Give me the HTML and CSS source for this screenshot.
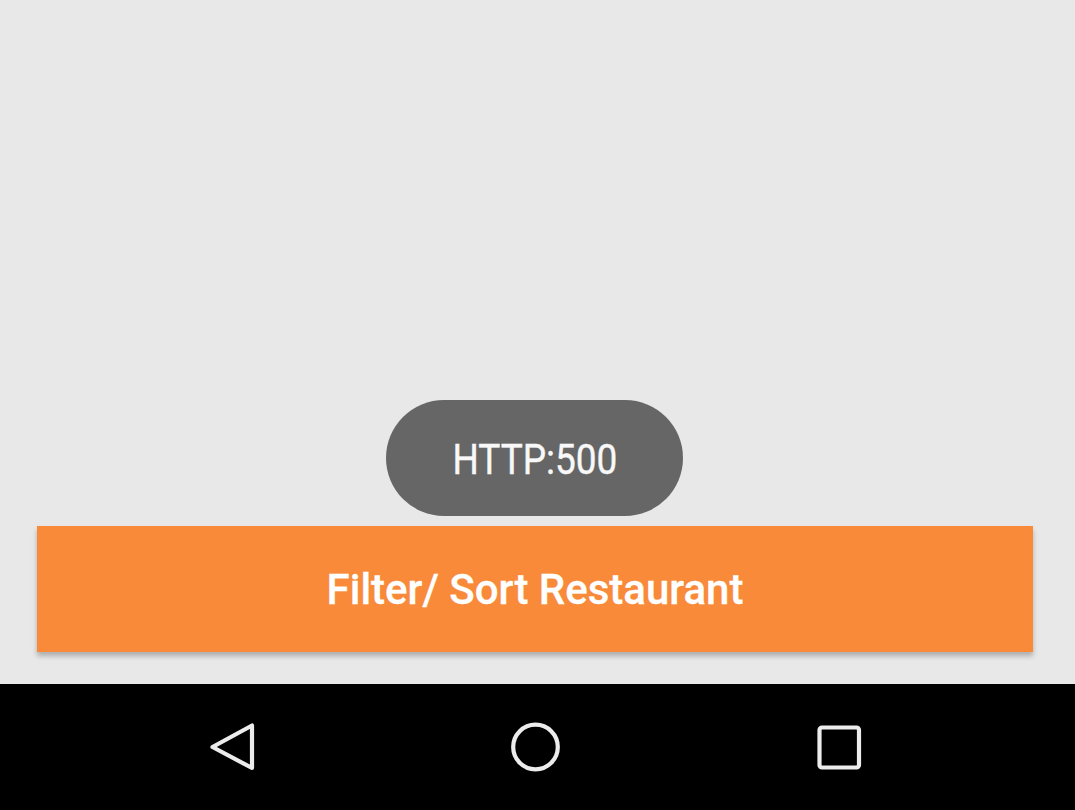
FILE: index.html
```html
<!DOCTYPE html>
<html>
<head>
<meta charset="utf-8">
<link rel="stylesheet" href="styles.css">
</head>
<body>
<div class="screen">
  <main class="content">
    <div class="toast"><span class="toast-text">HTTP:500</span></div>
    <button class="filter-btn">Filter/ Sort Restaurant</button>
  </main>
  <nav class="navbar">
    <div class="nav-icon">
      <svg width="60" height="60" viewBox="0 0 60 60"><polygon points="7.5,30 47,8.5 47,51" fill="none" stroke="#ececec" stroke-width="4.2" stroke-linejoin="round"/></svg>
    </div>
    <div class="nav-icon">
      <svg width="60" height="60" viewBox="0 0 60 60"><circle cx="27.5" cy="30" r="22.3" fill="none" stroke="#ececec" stroke-width="4.2"/></svg>
    </div>
    <div class="nav-icon">
      <svg width="60" height="60" viewBox="0 0 60 60"><rect x="8.5" y="10.5" width="39.5" height="40" rx="2.5" fill="none" stroke="#ececec" stroke-width="4.2"/></svg>
    </div>
  </nav>
</div>
</body>
</html>
```
FILE: styles.css
```css
html, body {
  margin: 0;
  padding: 0;
}
body {
  width: 1075px;
  height: 810px;
  overflow: hidden;
  font-family: Roboto, "Liberation Sans", sans-serif;
}
.screen {
  display: flex;
  flex-direction: column;
  height: 810px;
  background: #e8e8e8;
}
.content {
  flex: 1;
  display: flex;
  flex-direction: column;
  align-items: center;
  justify-content: flex-end;
  padding: 0 42px 32px 37px;
}
.toast {
  width: 297px;
  height: 116px;
  border-radius: 58px;
  background: #666666;
  display: flex;
  align-items: center;
  justify-content: center;
  margin-bottom: 10px;
  margin-right: 1px;
}
.toast-text {
  color: #f8f8f8;
  font-size: 43px;
  font-weight: 400;
  display: inline-block;
  transform: scaleX(0.86);
  margin-top: 2px;
  margin-left: 1px;
  -webkit-text-stroke: 0.4px #f8f8f8;
}
.filter-btn {
  width: 996px;
  height: 126px;
  border: none;
  margin: 0;
  padding: 2px 0 0 0;
  background: #f88a3a;
  color: #ffffff;
  font-family: Roboto, "Liberation Sans", sans-serif;
  font-size: 42px;
  font-weight: 500;
  line-height: 1;
  -webkit-text-stroke: 0.3px #ffffff;
  box-shadow: 0 4px 5px rgba(0,0,0,0.25);
  align-self: flex-start;
}
.navbar {
  height: 126px;
  background: #000;
  display: flex;
  align-items: center;
  justify-content: center;
  gap: 243px;
}
.nav-icon {
  width: 60px;
  height: 60px;
  display: flex;
}
```
